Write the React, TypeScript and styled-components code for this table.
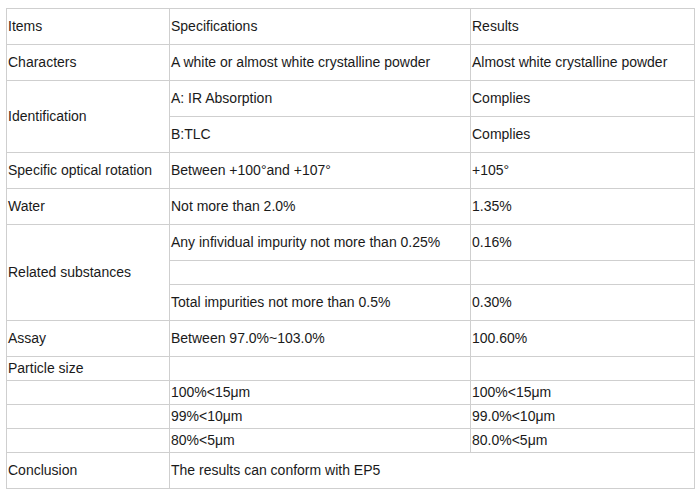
import React from "react";
import styled, { createGlobalStyle } from "styled-components";

const Global = createGlobalStyle`
  html, body { margin: 0; padding: 0; background: #fff; }
  body { font-family: "Liberation Sans", Arial, sans-serif; font-size: 14px; color: #222; }
`;

const Page = styled.div`
  padding: 8px 0 0 6px;
`;

const Table = styled.table`
  border-collapse: collapse;
  table-layout: fixed;
  width: 688px;
  font-family: "Liberation Sans", Arial, sans-serif;
  font-size: 14px;
  color: #1a1a1a;
`;

const Col = styled.col<{ $w: number }>`
  width: ${(p) => p.$w}px;
`;

const Cell = styled.td<{ $short?: boolean }>`
  border: 1px solid #cfcfcf;
  padding: 0 0 2px 1px;
  height: ${(p) => (p.$short ? 21 : 33)}px;
  vertical-align: middle;
  text-align: left;
  white-space: nowrap;
  line-height: 16px;
`;

type Row = {
  cells: { text: string; rowSpan?: number; colSpan?: number }[];
  short?: boolean;
};

const rows: Row[] = [
  { cells: [{ text: "Items" }, { text: "Specifications" }, { text: "Results" }] },
  {
    cells: [
      { text: "Characters" },
      { text: "A white or almost white crystalline powder" },
      { text: "Almost white crystalline powder" },
    ],
  },
  {
    cells: [
      { text: "Identification", rowSpan: 2 },
      { text: "A: IR Absorption" },
      { text: "Complies" },
    ],
  },
  { cells: [{ text: "B:TLC" }, { text: "Complies" }] },
  {
    cells: [
      { text: "Specific optical rotation" },
      { text: "Between +100°and +107°" },
      { text: "+105°" },
    ],
  },
  { cells: [{ text: "Water" }, { text: "Not more than 2.0%" }, { text: "1.35%" }] },
  {
    cells: [
      { text: "Related substances", rowSpan: 3 },
      { text: "Any infividual impurity not more than 0.25%" },
      { text: "0.16%" },
    ],
  },
  { cells: [{ text: "" }, { text: "" }], short: true },
  { cells: [{ text: "Total impurities not more than 0.5%" }, { text: "0.30%" }] },
  { cells: [{ text: "Assay" }, { text: "Between 97.0%~103.0%" }, { text: "100.60%" }] },
  { cells: [{ text: "Particle size" }, { text: "" }, { text: "" }], short: true },
  { cells: [{ text: "" }, { text: "100%<15μm" }, { text: "100%<15μm" }], short: true },
  { cells: [{ text: "" }, { text: "99%<10μm" }, { text: "99.0%<10μm" }], short: true },
  { cells: [{ text: "" }, { text: "80%<5μm" }, { text: "80.0%<5μm" }], short: true },
  {
    cells: [
      { text: "Conclusion" },
      { text: "The results can conform with EP5", colSpan: 2 },
    ],
  },
];

export default function App() {
  return (
    <>
      <Global />
      <Page>
        <Table>
          <colgroup>
            <Col $w={163} />
            <Col $w={301} />
            <Col $w={224} />
          </colgroup>
          <tbody>
            {rows.map((r, i) => (
              <tr key={i}>
                {r.cells.map((c, j) => (
                  <Cell key={j} $short={r.short} rowSpan={c.rowSpan} colSpan={c.colSpan}>
                    {c.text}
                  </Cell>
                ))}
              </tr>
            ))}
          </tbody>
        </Table>
      </Page>
    </>
  );
}
